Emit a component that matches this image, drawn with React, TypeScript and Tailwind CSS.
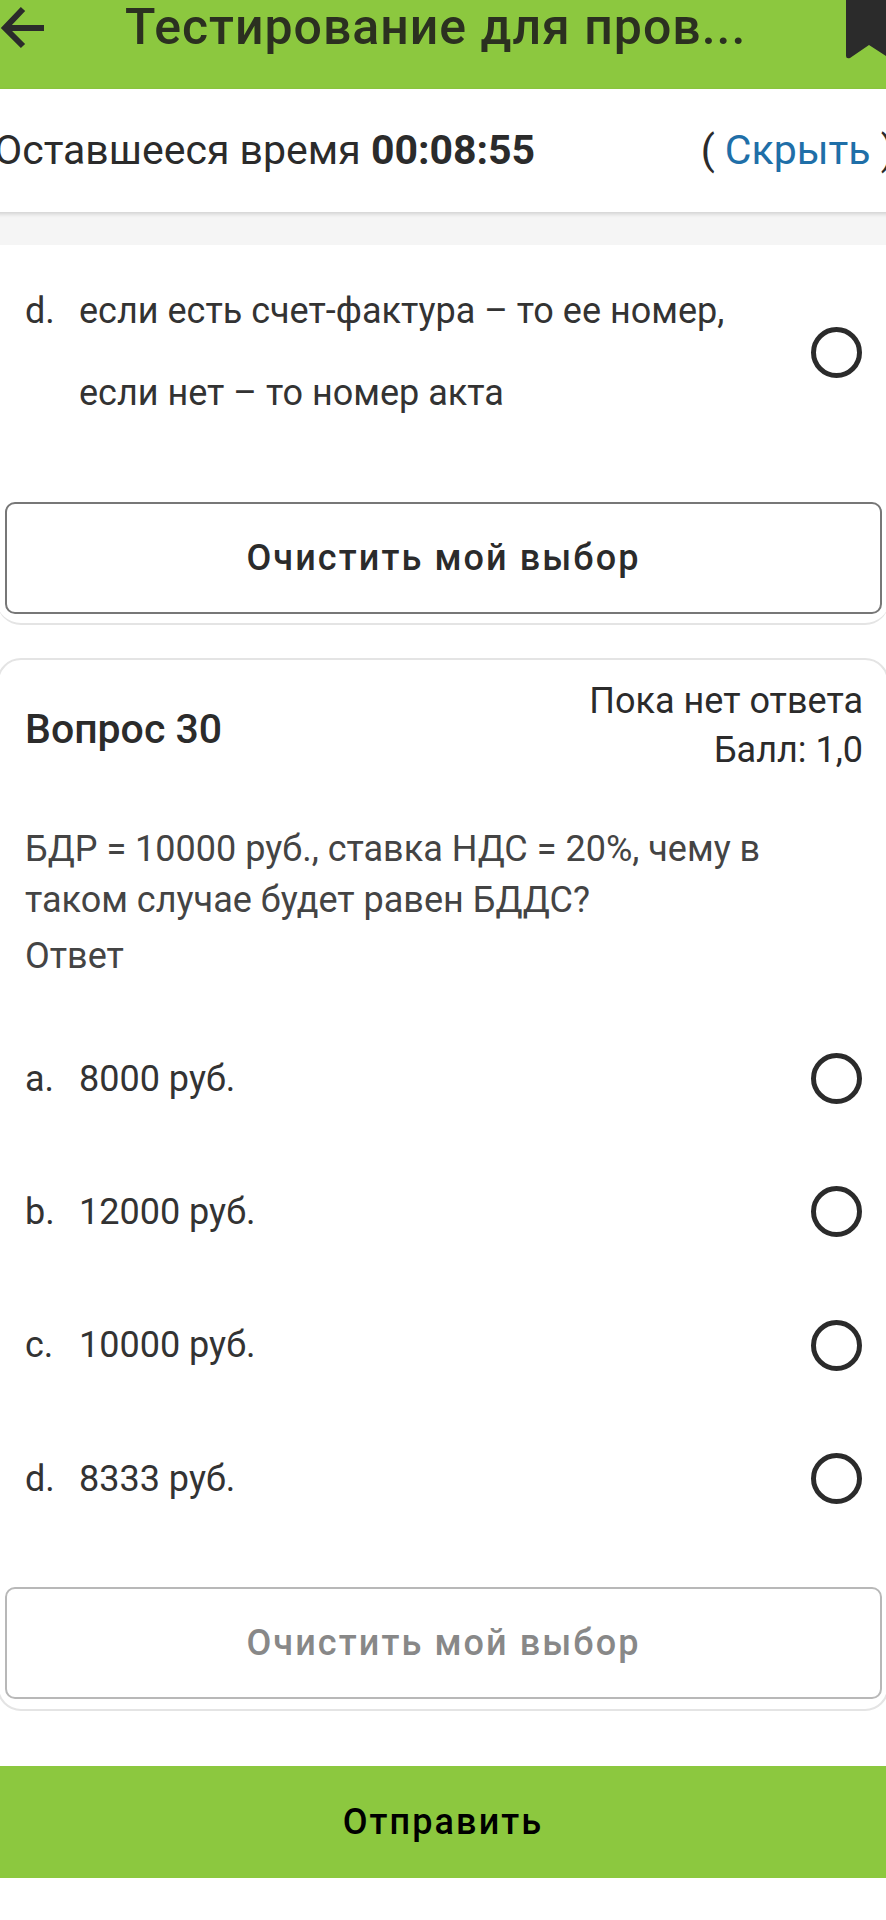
import React from 'react';

const Radio = () => (
    <span className="w-[51px] h-[51px] rounded-full border-[5px] border-[#2b2b2b] shrink-0 bg-white"></span>
);

const Option = ({ letter, text, height }: { letter: string, text: string, height: string }) => (
    <div className={`flex items-center justify-between pl-[25px] pr-[24px] ${height}`}>
        <div className="flex text-[36px] text-[#333]">
            <span className="w-[54px] shrink-0">{letter}</span>
            <span>{text}</span>
        </div>
        <Radio />
    </div>
);

const ClearButton = ({ disabled }: { disabled?: boolean }) => (
    <div className={`ml-[5px] mr-[4px] h-[112px] rounded-[10px] border-2 flex items-center justify-center text-[36px] font-medium tracking-[2.1px] ${disabled ? 'border-[#b8b8b8] text-[#888]' : 'border-[#777] text-[#2b2b2b]'}`}>
        Очистить мой выбор
    </div>
);

export default function App() {
    return (
        <div className="w-[886px] h-[1920px] overflow-hidden bg-white font-['Roboto',sans-serif]">
            <div className="h-[89px] bg-[#8cc83f] flex items-start relative">
                <svg className="shrink-0" width="46" height="56" viewBox="0 0 46 56" fill="none" stroke="#2b2b2b" strokeWidth="6">
                    <path d="M44 28H5" />
                    <path d="M23 9L5 28L23 46" />
                </svg>
                <h1 className="ml-[79px] -mt-[1px] text-[50px] leading-[56px] font-medium text-[#2b3020] tracking-[1px]">Тестирование для пров...</h1>
                <svg className="absolute right-0 top-0" width="40" height="59" viewBox="0 0 40 59">
                    <path d="M0 0H40V56L23 45L4 58Q0 59 0 56Z" fill="#2b2b2b" />
                </svg>
            </div>

            <div className="h-[123px] bg-white flex items-center justify-between -ml-[6px] -mr-[9px] shadow-[0_2px_4px_rgba(0,0,0,0.15)] relative text-[41px] text-[#2b2b2b]">
                <div>Оставшееся время <b className="font-bold">00:08:55</b></div>
                <div>( <span className="text-[#1f6fa8]">Скрыть</span> )</div>
            </div>

            <div className="h-[33px] bg-[#f5f5f5]"></div>

            <div className="-mx-[3px] px-[3px] h-[380px] border-b-2 border-[#e4e4e4] rounded-b-[24px]">
                <div className="h-[214px] mb-[43px] flex items-center justify-between pl-[25px] pr-[24px]">
                    <div className="flex text-[36px] leading-[82px] text-[#333]">
                        <span className="w-[54px] shrink-0">d.</span>
                        <span>если есть счет-фактура – то ее номер,<br />если нет – то номер акта</span>
                    </div>
                    <Radio />
                </div>
                <ClearButton />
            </div>

            <div className="-mx-[3px] mt-[33px] px-[3px] h-[1053px] border-2 border-[#e4e4e4] rounded-[24px] text-[#2b2b2b]">
                <div className="flex items-center justify-between pl-[23px] pr-[21px] pt-[17px]">
                    <div className="text-[41px] font-medium mt-[7px]">Вопрос 30</div>
                    <div className="text-right text-[36px] leading-[49px]">
                        <div>Пока нет ответа</div>
                        <div>Балл: 1,0</div>
                    </div>
                </div>
                <div className="pl-[23px] pr-[21px] mt-[49px] text-[36px] leading-[51px] text-[#444]">
                    <p>БДР = 10000 руб., ставка НДС = 20%, чему в<br />таком случае будет равен БДДС?</p>
                    <p className="mt-[5px]">Ответ</p>
                </div>
                <div className="mt-[30px] -mx-[2px]">
                    <Option letter="a." text="8000 руб." height="h-[133px]" />
                    <Option letter="b." text="12000 руб." height="h-[133px]" />
                    <Option letter="c." text="10000 руб." height="h-[134px]" />
                    <Option letter="d." text="8333 руб." height="h-[133px]" />
                </div>
                <div className="mt-[42px] -mx-[2px]"><ClearButton disabled /></div>
            </div>

            <div className="mt-[55px] h-[112px] bg-[#8cc83f] flex items-center justify-center text-[36px] font-medium tracking-[2.1px] text-black">
                Отправить
            </div>
        </div>
    );
}
